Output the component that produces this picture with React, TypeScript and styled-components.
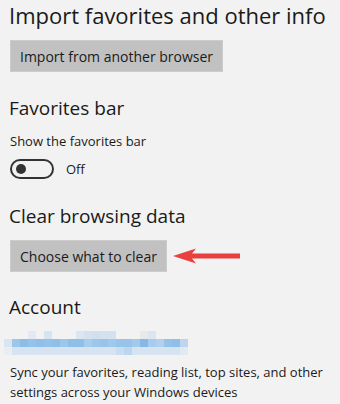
import React from "react";
import styled, { createGlobalStyle } from "styled-components";

const GlobalStyle = createGlobalStyle`
  html, body {
    margin: 0;
    padding: 0;
    background: #f2f2f2;
  }
  body {
    font-family: "Open Sans", "Noto Sans", sans-serif;
    color: #1a1a1a;
  }
`;

const Page = styled.div`
  display: flex;
  flex-direction: column;
  padding: 0 0 0 10px;
  width: 340px;
  height: 404px;
  box-sizing: border-box;
  overflow: hidden;
`;

const Heading = styled.h2<{ $top: number; $size?: number }>`
  margin: ${(p) => p.$top}px 0 0 -1px;
  font-size: ${(p) => p.$size ?? 19}px;
  font-weight: 400;
  line-height: 28px;
  white-space: nowrap;
  color: #1a1a1a;
`;

const Label = styled.div`
  margin-top: 9px;
  font-size: 13px;
  line-height: 20px;
`;

const Row = styled.div<{ $top: number }>`
  display: flex;
  align-items: center;
  gap: 6px;
  margin-top: ${(p) => p.$top}px;
`;

const Button = styled.button`
  box-sizing: border-box;
  height: 32px;
  padding: 0 9px;
  border: 1px solid #cccccc;
  background: #c1c1c1;
  font-family: inherit;
  font-size: 14px;
  color: #1a1a1a;
  cursor: pointer;
`;

const ToggleRow = styled.div`
  display: flex;
  align-items: center;
  gap: 12px;
  height: 20px;
  margin-top: 8px;
  font-size: 13px;
`;

const Track = styled.div`
  width: 44px;
  height: 20px;
  box-sizing: border-box;
  border: 2px solid #333333;
  border-radius: 10px;
  display: flex;
  align-items: center;
  padding-left: 4px;
`;

const Knob = styled.div`
  width: 10px;
  height: 10px;
  border-radius: 50%;
  background: #333333;
`;

const Blur = styled.div`
  display: grid;
  grid-template-columns: repeat(23, 8px);
  grid-auto-rows: 8px;
  margin: 10px 0 0 -6px;
`;

const Cell = styled.div`
  width: 8px;
  height: 8px;
`;

const Paragraph = styled.p`
  margin: 7px 0 0 0;
  font-size: 13px;
  line-height: 20px;
  white-space: nowrap;
`;

const B = "#f2f2f2";
const blurRows: string[][] = [
  [B, B, B, "#e2e9f2", B, "#d4e4f2", B, B, B, "#dce6f0", "#d4e2f0", "#cfe0ef", "#d4e2f0", "#d4e2f0", B, B, B, "#e8e9ea", "#dde6f0", B, B, B, B],
  ["#d9e5f0", "#9dc6ea", "#8bbde8", "#94c2e9", "#8fbfe8", "#94c2e9", "#8fbfe8", "#9dc6ea", "#8fbfe8", "#8fbfe8", "#a8cced", "#9dc6ea", "#98c3ea", "#a0c8eb", "#98c3ea", "#98c3ea", "#a3c9eb", "#85b8e5", "#a8cced", "#b0d0ee", "#94c2e9", "#8fbfe8", "#bcd6ef"],
  ["#ebeef1", "#d6e4f1", "#d6e4f1", "#d6e4f1", "#d6e4f1", "#d6e4f1", "#d6e4f1", "#d6e4f1", "#d6e4f1", "#d6e4f1", "#d6e4f1", "#d6e4f1", "#d6e4f1", "#d6e4f1", "#c9ddf0", "#bcd6ef", "#d6e4f1", "#d6e4f1", "#d6e4f1", "#d6e4f1", "#d6e4f1", "#d6e4f1", "#e2eaf1"],
];

const Arrow = () => (
  <svg width="68" height="17" viewBox="0 0 68 17">
    <polygon
      points="0,8 23,0.5 19,5.5 67,5.5 67,10.5 19,10.5 23,15.5"
      fill="#e8403f"
    />
  </svg>
);

export default function App() {
  return (
    <Page>
      <GlobalStyle />
      <Heading $top={1} $size={22}>
        Import favorites and other info
      </Heading>
      <Row $top={11}>
        <Button>Import from another browser</Button>
      </Row>

      <Heading $top={22}>Favorites bar</Heading>
      <Label>Show the favorites bar</Label>
      <ToggleRow>
        <Track>
          <Knob />
        </Track>
        <span>Off</span>
      </ToggleRow>

      <Heading $top={23}>Clear browsing data</Heading>
      <Row $top={10}>
        <Button>Choose what to clear</Button>
        <Arrow />
      </Row>

      <Heading $top={21}>Account</Heading>
      <Blur>
        {blurRows.map((row, r) =>
          row.map((c, i) => <Cell key={`${r}-${i}`} style={{ background: c }} />)
        )}
      </Blur>
      <Paragraph>
        Sync your favorites, reading list, top sites, and other
        <br />
        settings across your Windows devices
      </Paragraph>
    </Page>
  );
}
